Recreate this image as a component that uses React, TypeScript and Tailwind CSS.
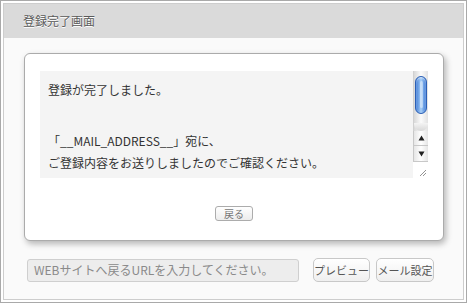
import React from "react";

const jp = { fontFamily: '"Noto Sans CJK JP", "Noto Sans", sans-serif' };

const AquaScrollbar = () => (
  <div className="flex w-[15px] shrink-0 flex-col bg-white">
    {/* track with thumb */}
    <div className="relative h-[60px] border-l border-[#d0d0d0] bg-gradient-to-r from-[#d8d8d8] via-[#fbfbfb] to-[#e2e2e2]">
      <div className="absolute left-[1px] top-[5px] h-[38px] w-[12px] rounded-full border border-[#2a5fb5] bg-gradient-to-r from-[#3a78d4] via-[#a9d0f7] to-[#3a78d4] shadow-[inset_0_1px_2px_rgba(255,255,255,0.7)]">
        <div className="mx-auto mt-[4px] h-[27px] w-[3px] rounded-full bg-white/40" />
      </div>
      <div className="absolute bottom-0 left-0 h-[8px] w-full rounded-b-full bg-gradient-to-b from-[#f4f4f4] to-[#d8d8d8]" />
    </div>
    <div className="flex h-[15px] items-center justify-center border-l border-b border-[#c8c8c8] bg-gradient-to-r from-[#e6e6e6] via-white to-[#e6e6e6]">
      <svg width="7" height="6" viewBox="0 0 7 6"><path d="M3.5 0.5 L6.5 5.5 L0.5 5.5 Z" fill="#222" /></svg>
    </div>
    <div className="flex h-[16px] items-center justify-center border-l border-b border-[#c8c8c8] bg-gradient-to-r from-[#e6e6e6] via-white to-[#e6e6e6]">
      <svg width="7" height="6" viewBox="0 0 7 6"><path d="M0.5 0.5 L6.5 0.5 L3.5 5.5 Z" fill="#222" /></svg>
    </div>
    <div className="flex flex-1 items-end justify-end bg-white pb-[1px] pr-[1px]">
      <svg width="8" height="8" viewBox="0 0 8 8">
        <path d="M1 7 L7 1 M4 7 L7 4" stroke="#777" strokeWidth="0.8" />
      </svg>
    </div>
  </div>
);

export default function App() {
  return (
    <div style={jp} className="h-[303px] w-[467px] border border-[#a9a9a9] bg-white p-[2px]">
      <div className="flex h-full flex-col border border-[#cdcdcd] bg-[#fafafa]">
        <div className="flex h-[34px] shrink-0 items-center bg-[#dadada] pl-[19px]">
          <span className="text-[12px] leading-none text-[#5a5a5a] [text-shadow:0_1px_0_#fff]">登録完了画面</span>
        </div>

        <div className="pl-[20px] pt-[15px]">
          <div className="flex h-[188px] w-[420px] flex-col rounded-[6px] border border-[#ababab] bg-white shadow-[2px_3px_6px_rgba(0,0,0,0.28)]">
            <div className="mx-[15px] mt-[17px] flex h-[107px] bg-[#f4f4f4]">
              <div className="flex-1 overflow-hidden pl-[8px] pt-[8px] text-[12px] leading-[22px] text-[#333]">
                <p>登録が完了しました。</p>
                <div className="h-[29px]" />
                <p>「__MAIL_ADDRESS__」宛に、</p>
                <p>ご登録内容をお送りしましたのでご確認ください。</p>
              </div>
              <AquaScrollbar />
            </div>
            <div className="mt-[28px] flex justify-center">
              <button className="h-[15px] w-[38px] rounded-[3px] border border-[#acacac] bg-gradient-to-b from-white to-[#ececec] text-[10px] leading-none text-[#777]">
                戻る
              </button>
            </div>
          </div>
        </div>

        <div className="mt-[17px] flex items-center pl-[23px]">
          <div className="flex h-[23px] w-[272px] items-center rounded-[3px] border border-[#cfcfcf] bg-[#ededed] pl-[6px] text-[12px] text-[#8a8a8a]">
            WEBサイトへ戻るURLを入力してください。
          </div>
          <button className="ml-[14px] h-[24px] w-[57px] rounded-[5px] border border-[#c8c8c8] bg-gradient-to-b from-white to-[#efefef] text-[11px] text-[#555]">
            プレビュー
          </button>
          <button className="ml-[6px] h-[24px] w-[58px] rounded-[5px] border border-[#c8c8c8] bg-gradient-to-b from-white to-[#efefef] text-[11px] text-[#555]">
            メール設定
          </button>
        </div>
      </div>
    </div>
  );
}
